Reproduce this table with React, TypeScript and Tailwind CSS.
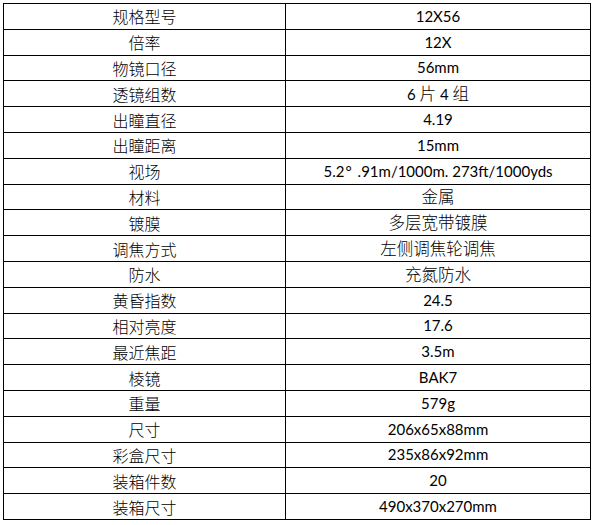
const rows: [string, string][] = [
  ["规格型号", "12X56"],
  ["倍率", "12X"],
  ["物镜口径", "56mm"],
  ["透镜组数", "6 片 4 组"],
  ["出瞳直径", "4.19"],
  ["出瞳距离", "15mm"],
  ["视场", "FIELD"],
  ["材料", "金属"],
  ["镀膜", "多层宽带镀膜"],
  ["调焦方式", "左侧调焦轮调焦"],
  ["防水", "充氮防水"],
  ["黄昏指数", "24.5"],
  ["相对亮度", "17.6"],
  ["最近焦距", "3.5m"],
  ["棱镜", "BAK7"],
  ["重量", "579g"],
  ["尺寸", "206x65x88mm"],
  ["彩盒尺寸", "235x86x92mm"],
  ["装箱件数", "20"],
  ["装箱尺寸", "490x370x270mm"],
];

// split text into CJK / non-CJK runs so Chinese gets its own size and weight
function Value({ text }: { text: string }) {
  if (text === "FIELD") {
    return (
      <>
        5.2<span className="mr-[6px] ml-[1px]">°</span>.91m/1000m. 273ft/1000yds
      </>
    );
  }
  const parts = text.split(/([\u4e00-\u9fff]+)/).filter(Boolean);
  return (
    <>
      {parts.map((p, i) =>
        /[\u4e00-\u9fff]/.test(p) ? (
          <span key={i} className="font-['Noto_Sans_CJK_SC',sans-serif] text-[16.5px] font-light">
            {p}
          </span>
        ) : (
          <span key={i}>{p}</span>
        )
      )}
    </>
  );
}

export default function App() {
  return (
    <div className="h-[525px] w-[595px] bg-white pl-[3px] pt-[3px] text-black">
      <table className="w-[588px] table-fixed border-collapse">
        <colgroup>
          <col className="w-[282px]" />
          <col />
        </colgroup>
        <tbody>
          {rows.map(([label, value]) => (
            <tr key={label} className="h-[25.8px]">
              <td className="border border-black p-0 text-center align-middle font-['Noto_Sans_CJK_SC',sans-serif] text-[16px] font-light leading-none">
                {label}
              </td>
              <td className="border border-black p-0 text-center align-middle font-['Lato','Noto_Sans_CJK_SC',sans-serif] text-[15px] leading-none">
                <Value text={value} />
              </td>
            </tr>
          ))}
        </tbody>
      </table>
    </div>
  );
}
